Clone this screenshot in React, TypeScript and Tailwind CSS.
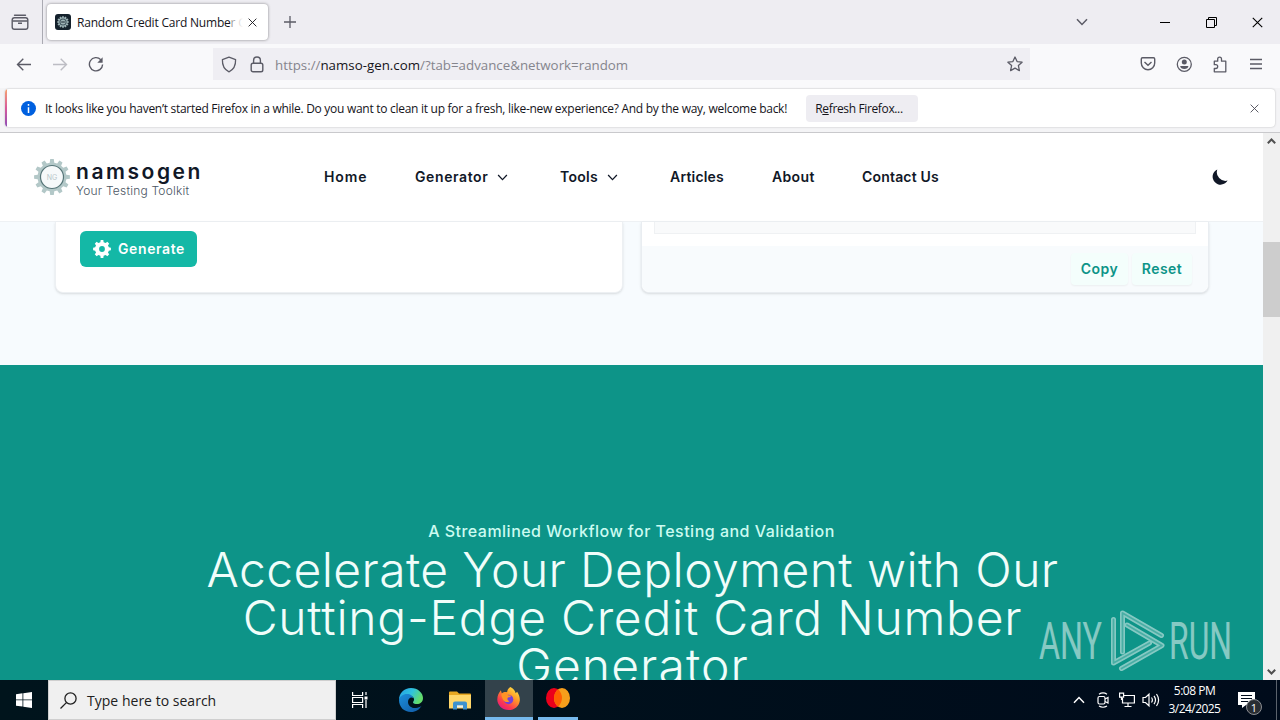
import React from 'react';

const ui = "font-['Open_Sans','Noto_Sans',sans-serif]";

const Chevron = ({ className = '' }: { className?: string }) => (
  <svg className={className} viewBox="0 0 12 8" fill="none" stroke="currentColor" strokeWidth="1.5">
    <path d="M1 1.2 6 6.4 11 1.2" />
  </svg>
);

const Cross = ({ className = '' }: { className?: string }) => (
  <svg className={className} viewBox="0 0 10 10" fill="none" stroke="currentColor" strokeWidth="1">
    <path d="M.7.7 9.3 9.3M9.3.7.7 9.3" />
  </svg>
);

/* Points round a toothed wheel centred on 0,0 */
const gearPath = (teeth: number, outer: number, inner: number) => {
  const pts: string[] = [];
  for (let i = 0; i < teeth; i++) {
    const mid = (i / teeth) * Math.PI * 2;
    const step = (Math.PI * 2) / teeth;
    [
      [-0.3, inner],
      [-0.19, outer],
      [0.19, outer],
      [0.3, inner],
    ].forEach(([o, r]) => {
      const a = mid + o * step;
      pts.push(`${(r * Math.cos(a)).toFixed(2)} ${(r * Math.sin(a)).toFixed(2)}`);
    });
  }
  return `M${pts.join('L')}Z`;
};

const TabStrip = () => (
  <div className="flex h-11 shrink-0 items-center bg-[#eeedf2] text-[#5b5b66]">
    <div className="flex h-full w-[43px] items-center justify-center border-r border-[#aaaab2] pr-0.5">
      <svg className="h-[17px] w-[18px]" viewBox="0 0 18 17" fill="none" stroke="currentColor" strokeWidth="1.4">
        <path d="M3.5 1.2h11" strokeLinecap="round" />
        <rect x="1.2" y="3.8" width="15.6" height="11.4" rx="2.2" />
        <path d="M1.5 7h15M7 9.3h4" />
      </svg>
    </div>
    <div className="ml-1 flex h-[36px] w-[221px] items-center rounded bg-white px-2 shadow-[0_0_3px_rgba(0,0,0,0.45)]">
      <svg className="h-4 w-4 shrink-0" viewBox="-8 -8 16 16">
        <rect x="-8" y="-8" width="16" height="16" rx="3" fill="#14212c" />
        <path d={gearPath(12, 6, 4.8)} fill="#9db3b6" />
        <circle r="3.6" fill="#3f535d" />
        <circle r="2.5" fill="#9db3b6" />
        <path d="M-1.8 0h3.6" stroke="#14212c" strokeWidth="1" />
      </svg>
      <div className={`relative ml-1.5 w-[166px] shrink-0 overflow-hidden pt-px text-[12px] leading-5 tracking-[-0.2px] whitespace-nowrap text-[#15141a] ${ui}`}>
        Random Credit Card Number Generator
        <div className="absolute inset-y-0 right-0 w-3 bg-gradient-to-r from-white/50 to-white" />
      </div>
      <Cross className="ml-[5px] h-[9px] w-[9px] shrink-0 text-[#15141a]" />
    </div>
    <svg className="ml-4 h-3 w-3" viewBox="0 0 12 12" stroke="currentColor" strokeWidth="1.3">
      <path d="M6 0v12M0 6h12" />
    </svg>
    <Chevron className="mr-[72px] ml-auto h-2 w-3" />
    <div className="mr-[36px] h-px w-[10px] bg-black" />
    <svg className="mr-[35px] h-[11px] w-[11px]" viewBox="0 0 11 11" fill="none" stroke="#000">
      <path d="M.5 2.5h8v8h-8zM2.5 2.5v-2h8v8h-2" />
    </svg>
    <Cross className="mr-[17px] h-[11px] w-[11px] text-black" />
  </div>
);

const Toolbar = () => (
  <div className="flex h-11 shrink-0 items-center bg-[#f9f9fb] pb-1 text-[#5b5b66]">
    <svg className="ml-4 h-4 w-4" viewBox="0 0 16 16" fill="none" stroke="currentColor" strokeWidth="1.4">
      <path d="M15 8.5H1.7M7.3 2.7 1.5 8.5l5.8 5.8" />
    </svg>
    <svg className="ml-5 h-4 w-4 text-[#bdbdc4]" viewBox="0 0 16 16" fill="none" stroke="currentColor" strokeWidth="1.4">
      <path d="M1 8.5h13.3M8.7 2.7l5.8 5.8-5.8 5.8" />
    </svg>
    <svg className="ml-5 h-4 w-4" viewBox="0 -.5 16 16" fill="none" stroke="currentColor" strokeWidth="1.4">
      <path d="M12.8 3.2A6.6 6.6 0 1 0 14.6 8" />
      <path d="M14.6.8v5.4H9.3z" fill="currentColor" stroke="none" />
    </svg>
    <div className="ml-[109px] flex h-8 w-[817px] items-center bg-[#efeef3] pl-2">
      <svg className="h-[17px] w-4" viewBox="0 0 16 17" fill="none" stroke="currentColor" strokeWidth="1.3">
        <path d="M8 1.2 14.6 3.6c.2 5.6-1.6 10-6.6 12.2C3 13.6 1.2 9.2 1.4 3.6z" strokeLinejoin="round" />
      </svg>
      <svg className="ml-[13px] h-[17px] w-[14px]" viewBox="0 0 14 17" fill="none" stroke="currentColor" strokeWidth="1.4">
        <rect x="1.2" y="7.2" width="11.6" height="8.6" rx="1.8" />
        <path d="M3.6 7V4.4a3.4 3.4 0 0 1 6.8 0V7" />
      </svg>
      <div className={`ml-[11px] pt-[3px] text-[13.3px] tracking-[0.01px] whitespace-nowrap text-[#85858d] ${ui}`}>
        https://<span className="text-[#15141a]">namso-gen.com</span>/?tab=advance&amp;network=random
      </div>
      <svg className="mr-[7px] ml-auto h-4 w-4" viewBox="0 0 16 16" fill="none" stroke="currentColor" strokeWidth="1.3" strokeLinejoin="round">
        <path d="m8 1 2.1 4.6 5 .6-3.7 3.4 1 5L8 12.1l-4.4 2.5 1-5L.9 6.2l5-.6z" />
      </svg>
    </div>
    <svg className="ml-[110px] h-4 w-4" viewBox="0 0 16 16" fill="none" stroke="currentColor" strokeWidth="1.4">
      <path d="M2.5 1.7h11c.7 0 1.2.5 1.2 1.2V7A6.7 6.7 0 0 1 1.3 7V2.9c0-.7.5-1.2 1.2-1.2z" />
      <path d="m4.5 6 3.5 3.3L11.5 6" />
    </svg>
    <svg className="ml-5 h-4 w-4" viewBox="0 0 16 16" fill="none" stroke="currentColor" strokeWidth="1.3">
      <circle cx="8.3" cy="8.3" r="7" />
      <circle cx="8.3" cy="6" r="2.5" fill="currentColor" stroke="none" />
      <path d="M4.2 10.1h8.2c0 2-1.9 3-4.1 3s-4.1-1-4.1-3z" fill="currentColor" stroke="none" />
    </svg>
    <svg className="ml-5 h-[17px] w-4" viewBox="0 0 16 17" fill="none" stroke="currentColor" strokeWidth="1.3" strokeLinejoin="round">
      <path d="M2.3 5.2h3.4V3.1a1.9 1.9 0 0 1 3.8 0v2.1h4.3v10.6H2.3v-3.3h1.5a1.9 1.9 0 0 0 0-3.8H2.3z" />
    </svg>
    <svg className="ml-[22px] h-4 w-3" viewBox="0 0 12 16" stroke="currentColor" strokeWidth="1.3">
      <path d="M0 3.5h12M0 8h12M0 12.5h12" />
    </svg>
  </div>
);

const Notice = () => (
  <div className="h-[45px] shrink-0 border-b border-[#c9c9cc] bg-[#f4f4f6] px-[5px] pt-px">
    <div className="flex h-[38px] items-center overflow-hidden rounded bg-white shadow-[0_0_2px_rgba(0,0,0,0.25)]">
      <div className="h-full w-0.5 bg-gradient-to-b from-[#f5a26b] via-[#d8599a] to-[#8d4bb5]" />
      <svg className="ml-3.5 h-[15px] w-[15px]" viewBox="0 0 15 15">
        <circle cx="7.5" cy="7.5" r="7.5" fill="#0060df" />
        <path d="M7.5 3v1.8M7.5 6.2V12" stroke="#fff" strokeWidth="1.5" />
      </svg>
      <div className={`ml-[9px] w-[743px] pt-px text-[12px] tracking-[-0.282px] whitespace-nowrap text-[#15141a] ${ui}`}>
        It looks like you haven’t started Firefox in a while. Do you want to clean it up for a fresh, like-new experience? And by the way, welcome back!
      </div>
      <button className={`ml-[18px] h-[27px] w-[112px] rounded bg-[#eeedf2] pt-px pr-1.5 text-[12px] tracking-[-0.36px] text-[#15141a] ${ui}`}>
        R<span className="underline underline-offset-1">e</span>fresh Firefox...
      </button>
      <Cross className="mr-4 ml-auto h-[9px] w-[9px] text-[#4a4a55]" />
    </div>
  </div>
);

const nav = [
  { label: 'Home', box: 'w-[43px]', text: 'tracking-[0.9px]' },
  { label: 'Generator', box: 'w-[97px]', text: 'tracking-[0.6px]', menu: true },
  { label: 'Tools', box: 'w-[62px]', text: 'tracking-[0.3px]', menu: true },
  { label: 'Articles', box: 'w-[54px]', text: 'tracking-[0.2px]' },
  { label: 'About', box: 'w-[42px]', text: 'tracking-[0.35px]' },
  { label: 'Contact Us', box: 'w-[77px]', text: 'tracking-[0.18px]' },
];

const SiteHeader = () => (
  <header className="flex h-[89px] shrink-0 items-center border-b border-[#eef1f4] bg-white text-[#111827]">
    <svg className="ml-[34px] h-9 w-9" viewBox="-18 -18 36 36">
      <path d={gearPath(12, 18, 14.5)} fill="#b3c8c8" />
      <circle r="11.5" fill="#f6f9fa" stroke="#567578" strokeWidth="1.2" />
      <text y="2.5" textAnchor="middle" fontSize="7" className="fill-[#b9c8cb] font-['Inter',sans-serif]">NG</text>
    </svg>
    <div className="ml-1.5 w-[248px] pt-1.5 whitespace-nowrap">
      <div className="text-[21px] leading-5 font-semibold tracking-[2.55px]">namsogen</div>
      <div className="text-[12px] leading-[17px] font-light tracking-[0.2px] text-[#4b5563]">Your Testing Toolkit</div>
    </div>
    <nav className="flex gap-12 pb-0.5 text-[14px] font-semibold">
      {nav.map((item) => (
        <div key={item.label} className={`flex items-center justify-between whitespace-nowrap ${item.box}`}>
          <span className={item.text}>{item.label}</span>
          {item.menu && <Chevron className="mt-0.5 mr-1 h-[7px] w-[11px]" />}
        </div>
      ))}
    </nav>
    <svg className="mr-[35px] ml-auto h-4 w-4" viewBox="0 0 16 16" fill="#111827">
      <path d="M5.3.4A8 8 0 1 0 15.6 11.6 8.7 8.7 0 0 1 5.3.4z" />
    </svg>
  </header>
);

const Panels = () => (
  <section className="flex h-[143px] shrink-0 gap-[18px] bg-[#f7fbfe] pl-[55px]">
    <div className="h-[71px] w-[568px] rounded-b-lg border-x border-b border-[#edf0f3] bg-white px-6 pt-[9px] shadow-sm">
      <button className="flex h-9 w-[117px] items-center rounded-md bg-[#14b8a6] pl-[13px] text-[14px] font-semibold whitespace-nowrap text-white">
        <svg className="mr-[7px] h-[18px] w-[18px]" viewBox="-9 -9 18 18">
          <path d={gearPath(8, 9, 7)} fill="#fff" />
          <circle r="2.9" fill="#14b8a6" />
        </svg>
        <span className="pb-0.5 tracking-[0.6px]">Generate</span>
      </button>
    </div>
    <div className="flex h-[71px] w-[568px] flex-col rounded-b-lg border-x border-b border-[#e9edf1] bg-white shadow-sm">
      <div className="mx-3 h-3 shrink-0 border-x border-b border-[#eff1f3] bg-[#f9fafb]" />
      <div className="mt-3 flex h-[47px] items-center justify-end gap-1 rounded-b-lg bg-[#f8fbfd] pr-4 text-[14px] font-semibold text-[#0d9488]">
        <button className="h-8 w-[57px] rounded bg-[#f4fefc] pb-0.5 tracking-[0.5px] shadow-xs">Copy</button>
        <button className="h-8 w-[60px] rounded bg-[#f4fefc] pb-0.5 tracking-[0.5px] shadow-xs">Reset</button>
      </div>
    </div>
  </section>
);

const Hero = () => (
  <section className="flex grow flex-col items-center overflow-hidden bg-[#0d9488] pt-[154px] whitespace-nowrap">
    <p className="text-[16px] leading-6 font-medium tracking-[0.48px] text-[#ccfbf1]">A Streamlined Workflow for Testing and Validation</p>
    <h2 className="mt-[3px] flex flex-col items-center pl-0.5 text-[48px] leading-[48px] font-[340] text-[#f0fdfa]">
      <span className="tracking-[0.4px]">Accelerate Your Deployment with Our</span>
      <span className="tracking-[0.75px]">Cutting-Edge Credit Card Number</span>
      <span className="tracking-[1.1px]">Generator</span>
    </h2>
  </section>
);

const Scrollbar = () => (
  <div className="flex w-[17px] flex-col items-center bg-[#f0f0f0] text-[#505050]">
    <svg className="mt-[5px] h-1.5 w-[9px]" viewBox="0 0 9 6" fill="none" stroke="currentColor" strokeWidth="2">
      <path d="M.8 5.2 4.5 1.500l3.700 3.700" />
    </svg>
    <div className="mt-[98px] h-[75px] w-full bg-[#cdcdcd]" />
    <svg className="mt-auto mb-[5px] h-1.5 w-[9px]" viewBox="0 0 9 6" fill="none" stroke="currentColor" strokeWidth="2">
      <path d="M.8.8l3.7 3.7L8.2.8" />
    </svg>
  </div>
);

/* Three interlocking strokes of the play mark */
const playMark = ['M1113.5 619.5V663l36-20', 'M1122.500 652v-39l39 22.500', 'M1127 625l35 20.500-40.500 23'];

const Watermark = () => (
  <svg className="absolute top-[605px] left-[1035px] h-[70px] w-[200px] opacity-50" viewBox="1035 605 200 70">
    <g className="fill-white font-['Roboto',sans-serif]" fontSize="52">
      <text x="1039" y="659" textLength="63" lengthAdjust="spacingAndGlyphs">ANY</text>
      <text x="1169" y="659" textLength="63" lengthAdjust="spacingAndGlyphs">RUN</text>
    </g>
    <g fill="none" strokeLinejoin="round" strokeLinecap="round">
      {playMark.map((d) => (
        <React.Fragment key={d}>
          <path d={d} stroke="#fff" strokeWidth="5" />
          <path d={d} stroke="#0d9488" strokeOpacity="0.5" strokeWidth="1.8" />
        </React.Fragment>
      ))}
    </g>
  </svg>
);

const EdgeIcon = () => (
  <svg className="h-6 w-6" viewBox="0 0 24 24">
    <defs>
      <linearGradient id="edgeTop" x1="0" y1="0" x2="1" y2=".4">
        <stop offset="0" stopColor="#249fe4" />
        <stop offset=".55" stopColor="#2fc2df" />
        <stop offset="1" stopColor="#63dc6b" />
      </linearGradient>
      <linearGradient id="edgeBody" x1="0" y1="0" x2="1" y2="1">
        <stop offset="0" stopColor="#1b8edb" />
        <stop offset="1" stopColor="#1159a4" />
      </linearGradient>
    </defs>
    <path d="M0 12C0 5 5 0 12 0s12 5 12 10c0 4-3 6-6 6-4 0-4.5-1.5-3.5-2.7 1.5-2 .2-5.3-3.5-5.3C6 7 1 9 0 12z" fill="url(#edgeTop)" />
    <path d="M0 12c.5-3.5 4-6 8-6 3.5 0 6 2 6.4 4.2C12 8.5 9 10.5 9 14c0 4 4 6.5 8 6 2-.2 4-1 5.5-2.3C20.5 21.5 17 24 12 24 5 24 0 19 0 12z" fill="url(#edgeBody)" />
  </svg>
);

const FolderIcon = () => (
  <svg className="h-[19px] w-[22px]" viewBox="0 0 22 19">
    <path d="M0 1.5Q0 .5 1 .5h7l2 2h11q1 0 1 1V17H0z" fill="#e8a821" />
    <path d="M0 4h22v13.5H0z" fill="#ffd76a" />
    <path d="M4 18.500v-6q0-2 2-2h10q2 0 2 2v6h-4v-4H8v4z" fill="#3d92cf" />
    <path d="M8 14.5h6v2H8z" fill="#e8f0f5" />
  </svg>
);

const FirefoxIcon = () => (
  <svg className="h-[23px] w-[23px]" viewBox="0 0 24 24">
    <defs>
      <linearGradient id="fox" x1=".9" y1="0" x2=".2" y2="1">
        <stop offset="0" stopColor="#fff04c" />
        <stop offset=".4" stopColor="#ff9a26" />
        <stop offset=".75" stopColor="#fb3a4e" />
        <stop offset="1" stopColor="#e31587" />
      </linearGradient>
    </defs>
    <path d="M14 0c3 1.5 5 4 5.5 6.5L21 5c2 3 3 6 2.8 9-.6 6-5.5 10-11.8 10S.3 19 .3 13C.3 9 2 6 4 3.500l1 3C7 5 9 5 10.500 5.500 10.800 3 12 1 14 0z" fill="url(#fox)" />
    <circle cx="12" cy="13" r="5" fill="#7541d8" />
    <path d="M5 7c2-1.5 5-1 6.5 1.5L15 9c-.5 1.5-3 1.5-4 2.5-.5 1.5.5 3 2 3-2 2.5-6 1-7-2S4 8.5 5 7z" fill="#ff9425" />
  </svg>
);

const Taskbar = () => (
  <footer className={`flex h-10 shrink-0 items-center bg-gradient-to-r from-[#00141c] to-[#000b1b] text-white ${ui}`}>
    <div className="flex w-12 justify-center">
      <svg className="h-4 w-4" viewBox="0 0 16 16" fill="#fff">
        <path d="M0 2.2 6.5 1.3v6.2H0zM7.3 1.2 16 0v7.5H7.3zM0 8.3h6.5v6.2L0 13.7zM7.3 8.3H16V16l-8.7-1.3z" />
      </svg>
    </div>
    <div className="flex h-10 w-72 items-center border border-[#cfcfcf] bg-[#f0f0f0] pl-[11px] text-[#202020]">
      <svg className="h-[17px] w-[17px]" viewBox="0 0 17 17" fill="none" stroke="currentColor" strokeWidth="1.3">
        <circle cx="10.5" cy="6.5" r="5.6" />
        <path d="M6.4 10.6.5 16.5" />
      </svg>
      <span className="ml-[10px] text-[14px] tracking-[0.02px] whitespace-nowrap">Type here to search</span>
    </div>
    <div className="flex w-12 justify-center">
      <svg className="h-4 w-4" viewBox="0 0 16 16" fill="none" stroke="#fff" strokeWidth="1.2">
        <path d="M.6 0v3.5h10V0M.6 16v-3.500h10V16M.6 5.500h10v5H.6zM14 0v3M14 8v8" />
        <path d="M12.5 4.5h3v3h-3z" fill="#fff" stroke="none" />
      </svg>
    </div>
    <div className="flex w-[54px] justify-center"><EdgeIcon /></div>
    <div className="flex w-[47px] justify-center pr-1"><FolderIcon /></div>
    <div className="flex h-10 w-12 flex-col items-center border-b-[3px] border-[#76b9ed] bg-[#33424b] pt-[7px] pr-0.5"><FirefoxIcon /></div>
    <div className="ml-[5px] flex h-10 w-10 flex-col items-center border-b-[3px] border-[#76b9ed] pt-2">
      <svg className="h-5 w-6" viewBox="0 0 24 20">
        <ellipse cx="8" cy="10" rx="8" ry="10" fill="#eb001b" />
        <ellipse cx="16" cy="10" rx="8" ry="10" fill="#f79e1b" />
        <path d="M12 1.3a11.5 11.5 0 0 1 0 17.4 11.5 11.5 0 0 1 0-17.4z" fill="#ff5f00" />
      </svg>
    </div>
    <Chevron className="mr-3 ml-auto h-2 w-3 rotate-180" />
    <svg className="mr-[9px] h-4 w-[13px]" viewBox="0 0 13 16" fill="none" stroke="#fff" strokeWidth="1.2">
      <rect x="1" y="4.5" width="7" height="7.500" rx="1.5" />
      <path d="m8 7 3-1.5V11L8 9.5M2 2.200q4-2.500 8 0M2 14q4 2.500 8 0" />
    </svg>
    <svg className="mr-[7px] h-4 w-4" viewBox="0 0 16 16" fill="none" stroke="#fff" strokeWidth="1.2">
      <path d="M5 3.5h10.4V11H3.5V6M9 11v3.500M5.500 14.500h7M.6 1.200h4v4h-4zM2.500 5v3" />
    </svg>
    <svg className="mr-0.5 h-4 w-[18px]" viewBox="0 0 18 16" fill="none" stroke="#fff" strokeWidth="1.2">
      <path d="M1 5.5h2.5L7 2.2v11.6l-3.5-3.300H1zM9.500 5.500q1.800 2.500 0 5M12 3.800q3 4.200 0 8.400M14.500 2q4.200 6 0 12" />
    </svg>
    <div className="w-[65px] text-center text-[12px] leading-[18px] whitespace-nowrap">
      <div className="tracking-[-0.5px]">5:08 PM</div>
      <div className="tracking-[-0.55px]">3/24/2025</div>
    </div>
    <div className="relative mr-[14px] ml-[11px] h-10 w-6">
      <svg className="mt-3 h-4 w-[17px]" viewBox="0 0 17 16">
        <path d="M0 0h17v13h-9l-4 3v-3H0z" fill="#fff" />
        <path d="M3 3.5h11M3 6.5h11M3 9.5h7" stroke="#000b1b" strokeWidth="1.2" />
      </svg>
      <div className="absolute top-[19px] left-2 flex h-4 w-4 items-center justify-center rounded-full border border-[#8b8d92] bg-[#292d33] text-[11px] leading-none">1</div>
    </div>
    <div className="mr-[3px] h-10 w-px bg-[#5b626c]" />
  </footer>
);

export default function App() {
  return (
    <div className="relative flex h-[720px] w-[1280px] flex-col overflow-hidden">
      <TabStrip />
      <Toolbar />
      <Notice />
      <main className="flex min-h-0 grow font-['Inter',sans-serif]">
        <div className="flex w-[1263px] flex-col">
          <SiteHeader />
          <Panels />
          <Hero />
        </div>
        <Scrollbar />
      </main>
      <Taskbar />
      <Watermark />
    </div>
  );
}
